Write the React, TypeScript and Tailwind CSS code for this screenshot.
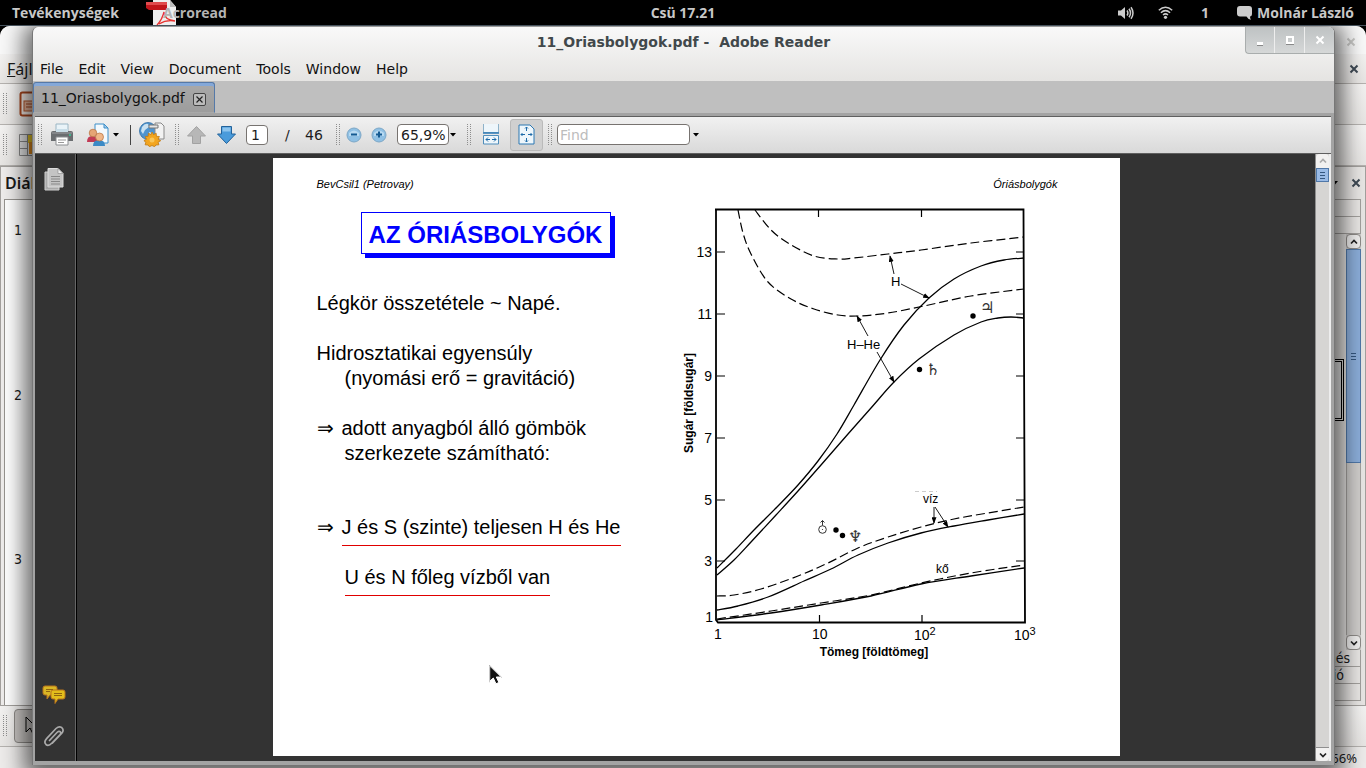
import { useState, type ReactNode } from "react";

type Point = [number, number];

const menus = ["File", "Edit", "View", "Document", "Tools", "Window", "Help"];

const solidCurves: Point[][] = [
  // H
  [[716, 568], [735, 549], [753, 530], [776, 507], [797, 485], [817, 461], [836, 434], [853, 405], [879, 360], [903, 325], [928, 298], [953, 279], [980, 266], [1003, 260], [1023, 258]],
  // H-He
  [[716, 575], [733, 560], [750, 542], [775, 515], [797, 491], [820, 465], [847, 434], [870, 408], [893, 382], [918, 359], [953, 335], [980, 322], [997, 318], [1010, 317], [1023, 318]],
  // water
  [[716, 610], [737, 606], [767, 597], [803, 581], [830, 569], [857, 555], [887, 543], [920, 533], [953, 526], [987, 520], [1023, 514]],
  // rock
  [[716, 620], [770, 613], [820, 605], [870, 596], [920, 584], [970, 576], [1023, 568]],
];

const dashedCurves: Point[][] = [
  [[754, 210], [770, 230], [787, 243], [813, 256], [837, 259], [853, 258], [887, 254], [920, 250], [970, 243], [1023, 237]],
  [[737, 210], [742, 233], [750, 254], [767, 282], [790, 299], [813, 309], [837, 315], [857, 316], [887, 313], [923, 306], [970, 296], [1023, 289]],
  [[716, 596], [733, 595], [760, 589], [797, 576], [827, 563], [857, 548], [887, 537], [920, 527], [953, 519], [987, 513], [1023, 507]],
  [[716, 619], [770, 611], [820, 603], [870, 595], [920, 583], [970, 573], [1023, 565]],
];

const yTicks = [
  { label: "13", y: 252 },
  { label: "11", y: 314 },
  { label: "9", y: 376 },
  { label: "7", y: 438 },
  { label: "5", y: 500 },
  { label: "3", y: 561 },
];

// Catmull-Rom spline through the sampled points
const smooth = (pts: Point[]) => {
  let d = `M${pts[0][0]} ${pts[0][1]}`;
  for (let i = 0; i < pts.length - 1; i++) {
    const p0 = pts[Math.max(0, i - 1)];
    const p1 = pts[i];
    const p2 = pts[i + 1];
    const p3 = pts[Math.min(pts.length - 1, i + 2)];
    d += `C${p1[0] + (p2[0] - p0[0]) / 6} ${p1[1] + (p2[1] - p0[1]) / 6} ${p2[0] - (p3[0] - p1[0]) / 6} ${p2[1] - (p3[1] - p1[1]) / 6} ${p2[0]} ${p2[1]}`;
  }
  return d;
};

function Grip({ className = "" }: { className?: string }) {
  return (
    <svg className={`shrink-0 ${className}`} width="4" height="22" aria-hidden="true">
      <path d="M.5 0V22M3.5 0V22" stroke="#8e8e8e" strokeDasharray="1 1" />
    </svg>
  );
}

function Caret({ label, className = "" }: { label: string; className?: string }) {
  return (
    <button aria-label={label} className={`flex h-5 w-2 shrink-0 items-center justify-center ${className}`}>
      <svg width="6" height="4" viewBox="0 0 6 4">
        <path d="M0 0h6L3 3.500z" fill="#000" />
      </svg>
    </button>
  );
}

function ToolButton({ label, className = "", children }: { label: string; className?: string; children: ReactNode }) {
  return (
    <button aria-label={label} title={label} className={`flex shrink-0 items-center justify-center ${className}`}>
      {children}
    </button>
  );
}

function Cross({ size = 10, color = "#3f4a55" }: { size?: number; color?: string }) {
  return (
    <svg width={size} height={size} viewBox="0 0 10 10" aria-hidden="true">
      <path d="M1.500 1.500l7 7M8.500 1.500l-7 7" stroke={color} strokeWidth="2" />
    </svg>
  );
}

function Chevron({ up, color = "#222" }: { up?: boolean; color?: string }) {
  return (
    <svg width="8" height="6" viewBox="0 0 8 6" aria-hidden="true">
      <path d={up ? "M1 4.500L4 1.500 7 4.500" : "M1 1.500L4 4.500 7 1.500"} fill="none" stroke={color} strokeWidth="1.700" />
    </svg>
  );
}

function Pointer({ className = "" }: { className?: string }) {
  return (
    <svg className={className} width="13" height="20" viewBox="0 0 13 20" aria-hidden="true">
      <path d="M.7.900V16.200L4.300 13 7 18.800 9.900 17.400 7.300 12H12z" fill="#111" stroke="#fff" strokeWidth="1" />
      <path d="M.2 0V17.300M.2 0L12.800 12.600" stroke="#777" strokeWidth=".5" />
    </svg>
  );
}

function TopPanel() {
  return (
    <header className="relative z-20 grid h-[26px] shrink-0 grid-cols-3 items-center border-b border-[#46525c] bg-black font-['Open_Sans',sans-serif] text-sm font-bold leading-5 text-[#c8c8c8]">
      <div className="flex items-center pl-3">
        <button className="w-[106px] text-left">Tevékenységek</button>
        <button className="relative ml-7 flex h-[25px] items-center pl-[17px]">
          <svg className="absolute left-0 top-0" width="31" height="25" viewBox="0 0 31 25" aria-hidden="true">
            <path d="M7 0H24l6 7V25H7z" fill="#eee" />
            <path d="M24 0l6 7h-6z" fill="#bbb" />
            <path d="M0 2H21V10H3L0 8z" fill="#c3161c" />
            <path d="M0 2H21V5H0z" fill="#e04a4d" />
            <path d="M11 25c4-4 6-9 7-13 0 5 3 8 11 9-6-1-11 0-16 3" fill="none" stroke="#e8312f" strokeWidth="1.300" />
          </svg>
          <span className="relative text-[#b4b4b4]">Acroread</span>
        </button>
      </div>
      <time className="text-center">Csü 17.21</time>
      <div className="flex items-center justify-end pr-3">
        <svg width="16" height="14" viewBox="0 0 16 14" fill="none" stroke="#ccc" strokeWidth="1.500" aria-hidden="true">
          <path d="M0 4.500h3L7 1v12L3 9.500H0z" fill="#ccc" stroke="none" />
          <path d="M9 4.500q1.800 2.500 0 5M11 2.800q3 4.200 0 8.400M13 1.200q4 5.800 0 11.600" />
        </svg>
        <svg className="ml-6" width="15" height="13" viewBox="0 0 15 13" fill="none" stroke="#ccc" strokeWidth="1.500" aria-hidden="true">
          <path d="M.8 4.200Q7.500-1.600 14.200 4.200M2.900 6.700Q7.500 2.600 12.100 6.700M5 9Q7.500 6.800 10 9" />
          <circle cx="7.500" cy="11.300" r="1.600" fill="#ccc" stroke="none" />
        </svg>
        <span className="ml-6 w-4 text-center">1</span>
        <svg className="ml-6" width="15" height="14" viewBox="0 0 15 14" aria-hidden="true">
          <path d="M3 0h9q3 0 3 3v4.500q0 3-2 3 0 2 1 3.300-3-.4-4.500-3.300H3q-3 0-3-3V3q0-3 3-3z" fill="#ccc" />
        </svg>
        <span className="ml-[5px]">Molnár László</span>
      </div>
    </header>
  );
}

function BackgroundWindow() {
  const bar = "flex shrink-0 items-center justify-between border-b border-[#b5b2af] bg-gradient-to-b from-[#f3f2f1] to-[#e7e5e3]";
  return (
    <section className="absolute inset-0 flex flex-col overflow-hidden rounded-t-[10px] bg-[#edebea] font-['Noto_Sans',sans-serif] text-base leading-5 text-[#1a1a1a]">
      <div className="flex h-7 shrink-0 items-center justify-end bg-[#f8f8f8] pr-[10px] pt-1">
        <Cross color="#c8c8c6" />
      </div>
      <div className={`${bar} h-[30px] px-[7px]`}>
        <span><u>F</u>ájl</span>
        <Cross />
      </div>
      <div className={`${bar} h-[41px] justify-start! pl-[3px]`}>
        <Grip />
        <svg className="ml-3" width="26" height="26" viewBox="0 0 26 26" aria-hidden="true">
          <rect x="1.500" y="1.500" width="23" height="23" rx="2" fill="#f5ede8" stroke="#a8461e" strokeWidth="2" />
          <rect x="5" y="10" width="14" height="10" fill="#e9b79c" stroke="#b5582c" />
          <path d="M7 13h9M7 16h9" stroke="#a8461e" />
        </svg>
      </div>
      <div className={`${bar} h-[41px] justify-start! pl-[3px]`}>
        <Grip />
        <svg className="ml-3" width="26" height="22" viewBox="0 0 26 22" aria-hidden="true">
          <path d="M.5.500h23v21H.5z" fill="#e6e6e6" stroke="#888" />
          <path d="M8 1h14v8H8z" fill="#e5c52a" />
          <path d="M10 8h8v12h-8z" fill="#e08a1e" />
          <path d="M.5 7.500h8M.5 14.500h8M8.500 1v20" stroke="#888" />
        </svg>
      </div>
      <div className="flex min-h-0 flex-1 justify-between">
        <div className="flex w-[120px] flex-col border border-[#a3a09d] bg-[#efedec]">
          <div className="flex h-8 shrink-0 items-center pl-1 font-semibold">Diák</div>
          <ol className="ml-[3px] min-h-0 flex-1 border-l border-t border-[#96938f] bg-white pl-[9px] pt-5 font-['DejaVu_Sans_Condensed','DejaVu_Sans',sans-serif] text-sm leading-5">
            <li className="h-[165px]">1</li>
            <li className="h-[164px]">2</li>
            <li>3</li>
          </ol>
        </div>
        <div className="flex w-[120px] flex-col border border-[#a3a09d] bg-[#e8e6e4] pr-1">
          <div className="flex h-8 shrink-0 items-center justify-end gap-3">
            <Caret label="Panel menü" />
            <Cross />
          </div>
          <div className="h-[18px] shrink-0 border border-[#a3a09d]" />
          <div className="h-[17px] shrink-0 border-x border-b border-[#a3a09d]" />
          <div className="flex min-h-0 flex-1 justify-end">
            <div className="mr-[2px] mt-[125px] h-[62px] w-[80px] border border-black p-px">
              <div className="h-full border border-black bg-[#eee]" />
            </div>
            <div className="flex w-[15px] flex-col bg-[#cfcdcb]">
              <div className="flex h-[15px] shrink-0 items-center justify-center rounded border border-[#8f8c89] bg-[#f0efee]"><Chevron up /></div>
              <div className="flex h-[214px] shrink-0 flex-col items-center justify-center gap-[2px] border border-[#5078a8] bg-[#8badd9]">
                <i className="h-px w-[5px] bg-[#35577f]" />
                <i className="h-px w-[5px] bg-[#35577f]" />
                <i className="h-px w-[5px] bg-[#35577f]" />
              </div>
              <div className="flex-1 border-x border-[#a3a09d]" />
              <div className="flex h-[15px] shrink-0 items-center justify-center rounded border border-[#8f8c89] bg-[#f0efee]"><Chevron /></div>
            </div>
          </div>
          <ul className="shrink-0 text-right font-['DejaVu_Sans_Condensed','DejaVu_Sans',sans-serif] text-sm leading-4">
            <li className="border-b border-r border-[#a3a09d] pr-[10px]">Áttűnés</li>
            <li className="border-b border-r border-[#a3a09d] pr-4">Animáció</li>
          </ul>
          <div className="mb-1 h-[17px] shrink-0 border-b border-r border-[#a3a09d]" />
        </div>
      </div>
      <div className={`${bar} h-[41px] justify-start! pl-[3px]`}>
        <Grip />
        <div className="ml-[7px] flex h-[34px] w-9 items-center rounded-sm border border-[#8d8a87] bg-[#c9c6c3] pl-[10px]">
          <svg width="13" height="20" viewBox="0 0 13 20" aria-hidden="true">
            <path d="M1 1V16L5 12 8 18l2-1-3-5h5z" fill="#c9c6c3" stroke="#000" />
          </svg>
        </div>
      </div>
      <div className="flex h-[21px] shrink-0 items-center justify-end pr-[9px] text-[13px]">66%</div>
    </section>
  );
}

function WindowButtons() {
  return (
    <div className="absolute right-0 top-0 flex h-[27px] rounded-bl border-b border-l border-[#a9adad] bg-gradient-to-b from-[#bec2c3] to-[#d6d8d8]">
      <button aria-label="Minimize" className="flex w-[29px] items-end justify-center border-r border-[#eee] pb-2">
        <span className="h-[3px] w-[6px] bg-white shadow-[0_1px_0_#888]" />
      </button>
      <button aria-label="Maximize" className="flex w-[30px] items-center justify-center border-r border-[#eee]">
        <span className="size-2 border-2 border-white shadow-[0_1px_0_#888]" />
      </button>
      <button aria-label="Close" className="flex w-[29px] items-center justify-center">
        <Cross color="#fff" />
      </button>
    </div>
  );
}

function Toolbar() {
  const [page, setPage] = useState("1");
  const [zoom, setZoom] = useState("65,9%");
  const [query, setQuery] = useState("");
  const field = "shrink-0 rounded-[4px] border border-[#777370] bg-white outline-none";

  return (
    <div className="flex h-[37px] shrink-0 items-center border-b border-[#5f5f5f] bg-gradient-to-b from-[#f1f1f1] to-[#d9d9d9] pb-px pl-[3px] text-sm text-[#1c1c1c]">
      <Grip />
      <ToolButton label="Print" className="ml-2 w-6">
        <svg width="22" height="23" viewBox="0 0 22 23">
          <path d="M5 1h12v8H5z" fill="#e9f3f8" stroke="#9bb6c4" />
          <path d="M2 8h18q2 0 2 2v8h-5v-3H5v3H0v-8q0-2 2-2z" fill="#6a6d70" />
          <path d="M1 10h20" stroke="#9da0a3" />
          <path d="M5 6h12v3H5z" fill="#c8dde8" />
          <path d="M5 14h12v8H5z" fill="#fff" stroke="#8a8d90" />
          <path d="M7 17h8M7 19.500h6" stroke="#999" />
          <circle cx="19" cy="12" r="1" fill="#3c9" />
        </svg>
      </ToolButton>
      <ToolButton label="Collaborate" className="ml-3 w-6">
        <svg width="23" height="24" viewBox="0 0 23 24">
          <path d="M8 1h9l4 4v15H8z" fill="#f3f9fd" stroke="#3d8fc9" />
          <path d="M17 1v4h4z" fill="#a6cdea" stroke="#3d8fc9" />
          <path d="M0 19q0-6 5-6t6 6z" fill="#c23a55" />
          <circle cx="6" cy="10" r="3.800" fill="#e6a575" stroke="#b8703c" strokeWidth=".7" />
          <path d="M6 23q0-6 6-6t6 6z" fill="#3b8ac6" />
          <circle cx="12.500" cy="14" r="4" fill="#f0b789" stroke="#b8703c" strokeWidth=".7" />
        </svg>
      </ToolButton>
      <Caret label="Collaborate menu" className="ml-[2px]" />
      <span className="ml-[10px] h-5 w-px shrink-0 bg-[#444]" />
      <ToolButton label="Acrobat.com" className="ml-2 w-[26px]">
        <svg width="26" height="25" viewBox="0 0 26 25">
          <circle cx="9" cy="9" r="8.500" fill="#4f94cf" stroke="#2d6ca3" strokeWidth=".8" />
          <path d="M3 5q3-4 6-3l1 3-4 3-2 4-2-3zM10 10l4 1-1 4-3 2z" fill="#c9e1f1" />
          <path d="M16 1h6l3 3v13h-9z" fill="#f2f2f2" stroke="#8a8a8a" />
          <path d="M10 3h9v3h-9z" fill="#e5e5e5" stroke="#777" />
          <path d="M13 10l1.500 2.600 2.700-1.300.2 3 3 .2-1.300 2.700 2.600 1.500-2.600 1.500.8 2.600-3 .2-1.300 1.700-2.600-1.200-2.600 1.200-1.300-1.700-3-.2.800-2.600-2-1.500 2.600-1.500-1.300-2.700 3-.2.200-3 2.700 1.300z" fill="#f2a51f" stroke="#c17a10" strokeWidth=".8" />
          <circle cx="13" cy="18" r="2.500" fill="#f9c65a" />
        </svg>
      </ToolButton>
      <Grip className="ml-[10px]" />
      <ToolButton label="Previous page" className="ml-[7px] w-[21px]">
        <svg width="19" height="18" viewBox="0 0 19 18">
          <path d="M9.500.500l9 9.500h-5v7.500h-8V10h-5z" fill="#b7b7b7" stroke="#a2a2a2" />
        </svg>
      </ToolButton>
      <ToolButton label="Next page" className="ml-[9px] w-[21px]">
        <svg width="19" height="18" viewBox="0 0 19 18">
          <path d="M9.500 17.500l9-9.500h-4V.500h-10V8h-4z" fill="#4a9bdb" stroke="#23629a" />
          <path d="M5.500 1.500h8v4h-8z" fill="#8cc4ee" />
        </svg>
      </ToolButton>
      <input aria-label="Page" value={page} onChange={(e) => setPage(e.target.value)} className={`${field} ml-[9px] h-5 w-[22px] pl-1`} />
      <span className="ml-[17px] w-5">/</span>
      <span className="w-[31px]">46</span>
      <Grip />
      <ToolButton label="Zoom out" className="ml-[6px] w-4">
        <svg width="16" height="16" viewBox="0 0 16 16">
          <circle cx="8" cy="8" r="7" fill="#8fc0e4" stroke="#7da7c6" />
          <path d="M3 6q5-5 10 0v3H3z" fill="#b7d9f1" />
          <path d="M5 7.500h6" stroke="#145a92" strokeWidth="2" />
        </svg>
      </ToolButton>
      <ToolButton label="Zoom in" className="ml-[9px] w-4">
        <svg width="16" height="16" viewBox="0 0 16 16">
          <circle cx="8" cy="8" r="7" fill="#8fc0e4" stroke="#7da7c6" />
          <path d="M3 6q5-5 10 0v3H3z" fill="#b7d9f1" />
          <path d="M5 7.500h6M8 4.500v6" stroke="#145a92" strokeWidth="2" />
        </svg>
      </ToolButton>
      <select aria-label="Zoom" value={zoom} onChange={(e) => setZoom(e.target.value)} className={`${field} ml-[10px] h-[21px] w-[52px] appearance-none pl-[3px] leading-[18px]`}>
        <option>65,9%</option>
        <option>100%</option>
      </select>
      <Caret label="Zoom levels" />
      <Grip className="ml-[10px]" />
      <ToolButton label="Fit width" className="ml-[10px] w-5">
        <svg width="16" height="21" viewBox="0 0 16 21">
          <path d="M.5 0v8.500h15V0" fill="#eef6fb" stroke="#8fb2c9" />
          <path d="M0 9h16" stroke="#2c78b3" strokeWidth="1.500" />
          <path d="M.5 20V11.500h15V20z" fill="#eef6fb" stroke="#4f8dbb" />
          <path d="M3 15.500h4M9 15.500h4M5 13.500l-2 2 2 2M11 13.500l2 2-2 2" fill="none" stroke="#1d6aa8" />
        </svg>
      </ToolButton>
      <ToolButton label="Fit page" className="ml-[9px] h-8 w-[33px] rounded-[3px] border border-[#bababa] bg-[#d0d0d0]">
        <svg width="17" height="21" viewBox="0 0 17 21">
          <path d="M1 1h11l4 4v15H1z" fill="#eef6fb" stroke="#2c78b3" />
          <path d="M8.500 3v4M8.500 14v4M3 10.500h4M10 10.500h4M7 4.500L8.500 3 10 4.500M7 16.500L8.500 18l1.500-1.500M4.500 9L3 10.500 4.500 12M12.500 9l1.500 1.500-1.500 1.500" fill="none" stroke="#1d6aa8" />
        </svg>
      </ToolButton>
      <Grip className="ml-[5px]" />
      <input aria-label="Find" placeholder="Find" value={query} onChange={(e) => setQuery(e.target.value)} className={`${field} ml-[5px] h-[21px] w-[133px] pl-[2px] placeholder:text-[#bcbcbc]`} />
      <Caret label="Find options" className="ml-[2px]" />
    </div>
  );
}

function Chart() {
  return (
    <svg className="mr-[79px] mt-3 shrink-0" width="360" height="460" viewBox="680 204 360 460" fontFamily="'Liberation Sans', sans-serif" fill="#000">
      <defs>
        <marker id="arrow" viewBox="0 0 8 6" refX="7" refY="3" markerWidth="7" markerHeight="5" markerUnits="userSpaceOnUse" orient="auto">
          <path d="M0 0l8 3-8 3z" />
        </marker>
      </defs>
      <g fill="none" stroke="#000">
        <path d="M715 209V620L717 622.500H1024L1022.500 209.500H714" strokeWidth="1.800" />
        {yTicks.map((t) => (
          <path key={t.label} d={`M716 ${t.y}h8M1015 ${t.y}h8`} strokeWidth="1.200" />
        ))}
        <path d="M817.500 210v7M920.500 210v7M818.500 622v-7M921 622v-7" strokeWidth="1.200" />
        {solidCurves.map((c, i) => (
          <path key={i} d={smooth(c)} strokeWidth="1.300" />
        ))}
        {dashedCurves.map((c, i) => (
          <path key={i} d={smooth(c)} strokeWidth="1.200" strokeDasharray="9 4" />
        ))}
        <g strokeWidth=".9">
          <path d="M893 274L889 256" markerEnd="url(#arrow)" />
          <path d="M900 284L928 298" markerEnd="url(#arrow)" />
          <path d="M867 336L856 316" markerEnd="url(#arrow)" />
          <path d="M876 352L893 382" markerEnd="url(#arrow)" />
          <path d="M933 507V523" markerEnd="url(#arrow)" />
          <path d="M934 507L947 527" markerEnd="url(#arrow)" />
        </g>
        <path d="M914 491.500h22" stroke="#ccc" strokeDasharray="4 3" />
      </g>
      <g fontSize="14" textAnchor="end">
        {yTicks.map((t) => (
          <text key={t.label} x="711" y={t.y + 5}>{t.label}</text>
        ))}
        <text x="712" y="622">1</text>
      </g>
      <g fontSize="14">
        <text x="713" y="639">1</text>
        <text x="811" y="639">10</text>
        <text x="913" y="640">10<tspan fontSize="11" dy="-5">2</tspan></text>
        <text x="1013" y="640">10<tspan fontSize="11" dy="-5">3</tspan></text>
        <text x="890" y="286" fontSize="13">H</text>
        <text x="846" y="349" fontSize="13">H–He</text>
      </g>
      <g fontSize="12">
        <text x="922" y="503">víz</text>
        <text x="935" y="573">kő</text>
      </g>
      <g fontSize="12" fontWeight="bold" textAnchor="middle">
        <text x="873" y="656">Tömeg [földtömeg]</text>
        <text transform="translate(692 403) rotate(-90)">Sugár [földsugár]</text>
      </g>
      <circle cx="972" cy="316" r="2.700" />
      <circle cx="918.500" cy="369.500" r="2.700" />
      <circle cx="835" cy="530" r="2.700" />
      <circle cx="841.500" cy="535.500" r="2.700" />
      <g fontFamily="'DejaVu Sans', sans-serif" fontSize="16" fill="#333">
        <text x="979" y="313">♃</text>
        <text x="925" y="375">♄</text>
        <text x="847" y="542">♆</text>
      </g>
      <g fill="none" stroke="#333">
        <circle cx="821.500" cy="529.500" r="3.800" />
        <path d="M821.500 525.500v-5M819.500 522.500l2-2 2 2" />
        <circle cx="821.500" cy="529.500" r=".6" fill="#333" stroke="none" />
      </g>
    </svg>
  );
}

function Slide() {
  return (
    <article className="aspect-[847/598] h-full shrink-0 overflow-hidden bg-white pt-[18px] font-['Liberation_Sans',Arial,sans-serif] text-black">
      <div className="flex justify-between pl-11 pr-[62px] text-[11px] italic leading-4">
        <span>BevCsil1 (Petrovay)</span>
        <span>Óriásbolygók</span>
      </div>
      <div className="flex justify-between pl-11">
        <div className="whitespace-nowrap pt-5 text-xl leading-[25px]">
          <h1 className="ml-11 flex h-[42px] w-[250px] items-center justify-center border border-[#00f] bg-white pt-1 text-2xl font-bold text-[#00f] shadow-[4px_4px_0_#00f]">
            AZ ÓRIÁSBOLYGÓK
          </h1>
          <p className="mt-[37px]">Légkör összetétele ~ Napé.</p>
          <p className="mt-[25px]">Hidrosztatikai egyensúly</p>
          <p className="pl-7">(nyomási erő = gravitáció)</p>
          <p className="mt-[25px] flex">
            <span className="w-[25px] font-['Liberation_Serif',serif]">⇒</span>adott anyagból álló gömbök
          </p>
          <p className="pl-7">szerkezete számítható:</p>
          <p className="mt-[49px] flex">
            <span className="w-[25px] font-['Liberation_Serif',serif]">⇒</span>
            <span className="border-b border-[#e00000] pb-[5px]">J és S (szinte) teljesen H és He</span>
          </p>
          <p className="ml-7 mt-[19px] w-fit border-b border-[#e00000] pb-[5px]">U és N főleg vízből van</p>
        </div>
        <Chart />
      </div>
    </article>
  );
}

function NavPane() {
  return (
    <nav className="flex w-[42px] shrink-0 flex-col items-center justify-between border-r border-black pb-3 pt-[14px] shadow-[inset_-1px_0_0_#666]">
      <ToolButton label="Pages" className="mr-1">
        <svg width="20" height="23" viewBox="0 0 20 23">
          <path d="M1 4h14v18H1z" fill="#a9a9a9" stroke="#d0d0d0" />
          <path d="M4 .500h10l5 5v13.500H4z" fill="#c4c4c4" stroke="#ddd" />
          <path d="M14 .500v5h5z" fill="#eee" stroke="#888" strokeWidth=".6" />
          <path d="M7 8.500h9M7 11h9M7 13.500h9M7 16h9" stroke="#888" />
        </svg>
      </ToolButton>
      <div className="flex flex-col items-center gap-5 pr-1">
        <ToolButton label="Comments">
          <svg width="24" height="20" viewBox="0 0 24 20">
            <path d="M3 1h10q2 0 2 2v5q0 2-2 2H8l-3 4V10H3Q1 10 1 8V3q0-2 2-2z" fill="#d9b625" stroke="#b8741c" />
            <path d="M11 5h10q2 0 2 2v5q0 2-2 2h-5l-3 4.500V14h-2q-2 0-2-2V7q0-2 2-2z" fill="#e2bd1b" stroke="#b8741c" />
            <path d="M4 4.500h7M4 6.500h4M12 8.500h8M12 10.500h8" stroke="#8f6410" />
          </svg>
        </ToolButton>
        <ToolButton label="Attachments">
          <svg width="22" height="24" viewBox="0 0 22 24" fill="none" stroke="#aaa" strokeWidth="1.700" strokeLinecap="round">
            <path d="M6.500 15.500L14 7.500q2-2 3.300-.7 1.300 1.400-.6 3.400L9 18q-3.500 3.600-6 1.500-2.600-2.600.8-6.200L13 3.500q3-2.800 5.500-1.100Q21.500 5 18.800 8.300L9.500 18" />
          </svg>
        </ToolButton>
      </div>
    </nav>
  );
}

function ReaderWindow() {
  return (
    <section className="absolute bottom-[3px] left-8 right-[31px] top-px flex flex-col overflow-hidden rounded-t-md border-l border-r border-[#777] bg-[#a3a3a3] pb-1 font-['DejaVu_Sans',sans-serif] text-sm text-[#111] shadow-[0_4px_22px_8px_rgba(0,0,0,0.6)]">
      <div className="relative flex h-[54px] shrink-0 flex-col bg-gradient-to-b from-[#f9f9f9] to-[#e5e4e2]">
        <h2 className="whitespace-pre pt-1 text-center text-sm font-bold leading-[22px] text-[#41484b]">{"11_Oriasbolygok.pdf -  Adobe Reader"}</h2>
        <WindowButtons />
        <nav className="flex flex-1 items-center gap-[15px] pl-[7px] pt-[3px]">
          {menus.map((m) => (
            <button key={m}>{m}</button>
          ))}
        </nav>
      </div>
      <div className="flex h-8 shrink-0 items-end bg-[#bfbfbf]">
        <div className="flex h-[31px] w-[182px] items-center justify-between rounded-t-[3px] border border-[#5579a8] border-b-transparent bg-gradient-to-b from-[#a9a9a9] to-[#9d9d9d] pl-[7px] pr-2 shadow-[inset_0_3px_0_#84a8d8]">
          <span>11_Oriasbolygok.pdf</span>
          <button aria-label="Close tab" className="mt-1 flex size-[13px] items-center justify-center rounded-[2px] border border-[#444] bg-[#bbb]">
            <svg width="7" height="7" viewBox="0 0 7 7"><path d="M.5.500l6 6M6.500.500l-6 6" stroke="#222" strokeWidth="1.200" /></svg>
          </button>
        </div>
      </div>
      <div className="ml-[2px] mr-[3px] mt-[3px] flex min-h-0 flex-1 flex-col border-t border-[#5f5f5f]">
        <Toolbar />
        <div className="flex min-h-0 flex-1 bg-[#333]">
          <NavPane />
          <main className="flex min-w-0 flex-1 justify-center overflow-hidden pb-[5px] pt-1">
            <Slide />
          </main>
          <div className="flex w-4 shrink-0 flex-col border-l border-r-2 border-l-[#8f8f8f] border-r-[#eee] bg-[#d6d5d3]">
            <button aria-label="Scroll up" className="flex h-[14px] shrink-0 items-center justify-center rounded-t bg-[#f2f1f0]"><Chevron up color="#aaa" /></button>
            <div className="flex h-[14px] shrink-0 flex-col items-center justify-center gap-[2px] border border-[#5078a8] bg-[#9abbe6]">
              <i className="h-px w-[5px] bg-[#35577f]" />
              <i className="h-px w-[5px] bg-[#35577f]" />
              <i className="h-px w-[5px] bg-[#35577f]" />
            </div>
            <div className="flex-1" />
            <button aria-label="Scroll down" className="flex h-[14px] shrink-0 items-center justify-center rounded-b border-t border-[#8f8f8f] bg-[#f2f1f0]"><Chevron /></button>
          </div>
        </div>
      </div>
    </section>
  );
}

export default function App() {
  return (
    <div className="flex h-screen flex-col overflow-hidden bg-black">
      <TopPanel />
      <div className="relative min-h-0 flex-1">
        <BackgroundWindow />
        <ReaderWindow />
        <Pointer className="pointer-events-none absolute left-[489px] top-[639px]" />
      </div>
    </div>
  );
}
